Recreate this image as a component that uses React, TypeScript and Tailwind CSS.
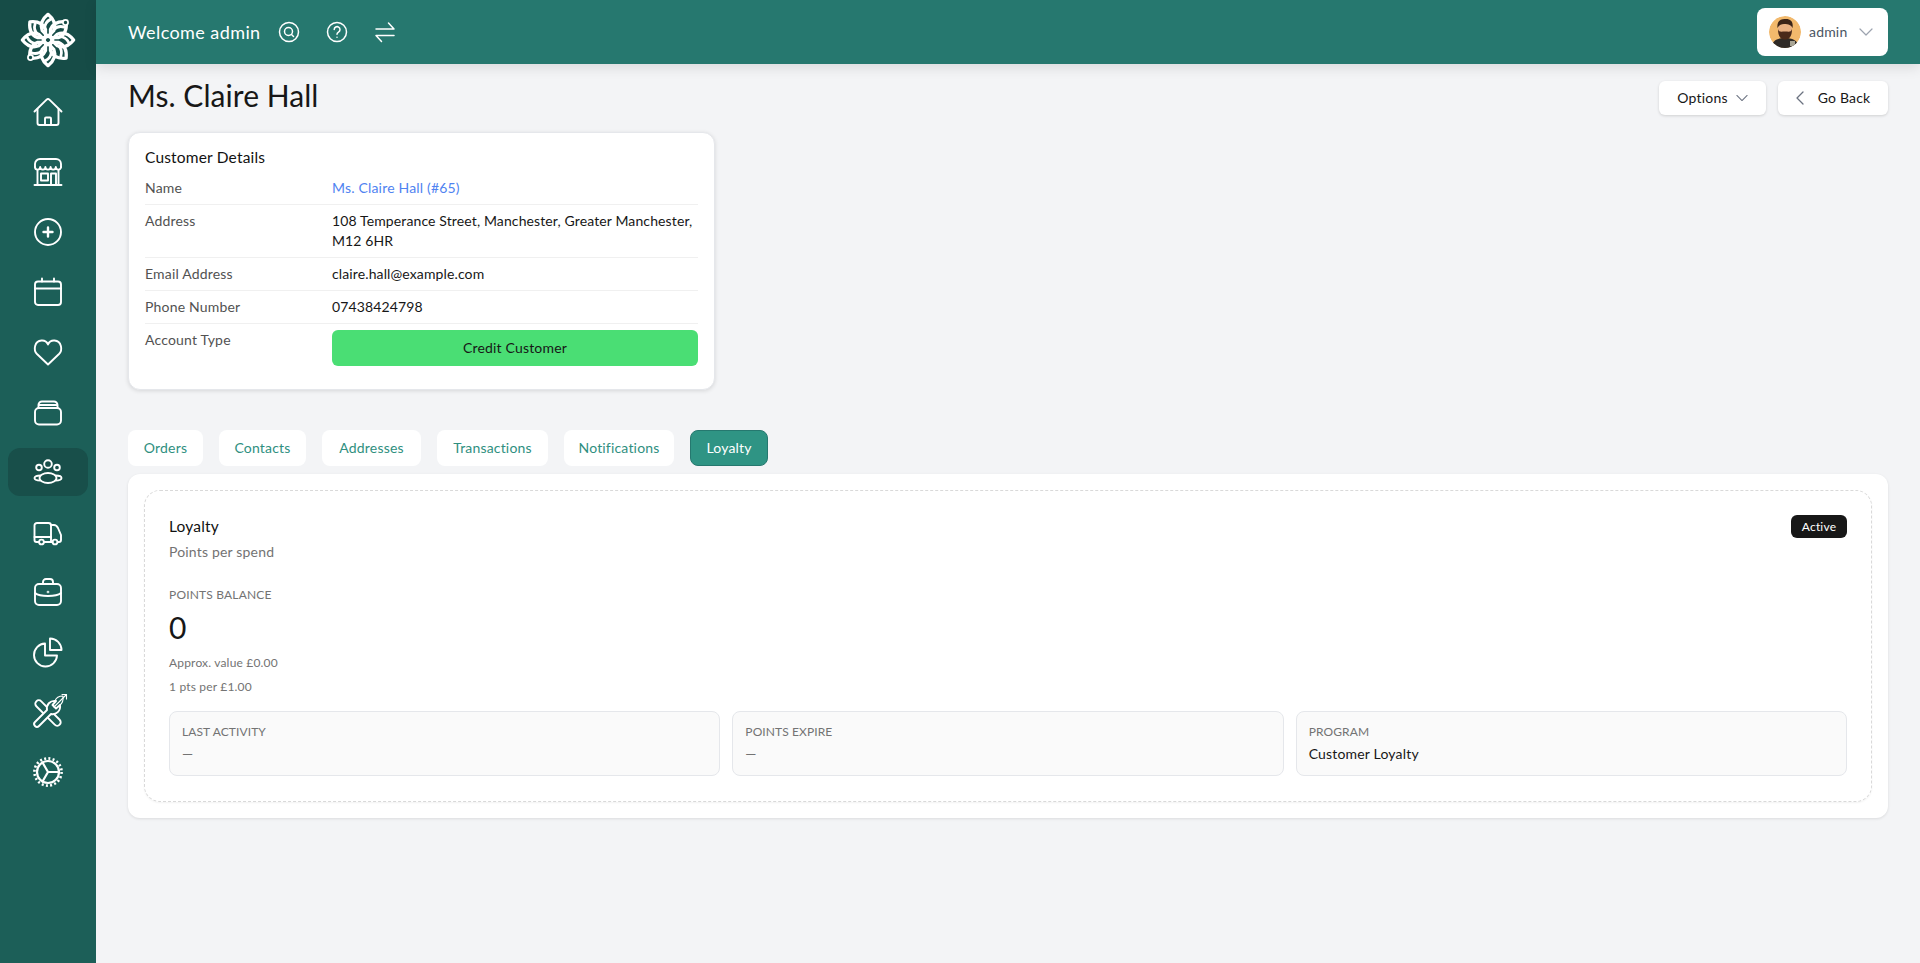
import React from "react";

const S = ({ children }: { children: React.ReactNode }) => (
  <svg width="32" height="32" viewBox="0 0 32 32" fill="none" stroke="white" strokeWidth="1.9" strokeLinecap="round" strokeLinejoin="round">
    {children}
  </svg>
);

const icons: React.ReactNode[] = [
  <S key="home">
    <path d="M2.5 15.5 L14.6 3.6 a2 2 0 0 1 2.8 0 L29.5 15.5" />
    <path d="M5.5 13 V27 a2 2 0 0 0 2 2 h17 a2 2 0 0 0 2-2 V13" />
    <path d="M13 29 v-6.5 a1 1 0 0 1 1-1 h4 a1 1 0 0 1 1 1 V29" />
  </S>,
  <S key="store">
    <path d="M5.500 14 V29 M26.500 14 V29 M2.500 29 H29.500" />
    <path d="M3 11 V8 a5 5 0 0 1 5-5 h16 a5 5 0 0 1 5 5 v3" />
    <path d="M3 11 a2.600 2.600 0 0 0 5.200 0 a2.600 2.600 0 0 0 5.200 0 a2.600 2.600 0 0 0 5.200 0 a2.600 2.600 0 0 0 5.200 0 a2.600 2.600 0 0 0 5.200 0" />
    <path d="M9 17.500 h7 v7 H9z" />
    <path d="M19 29 V17.500 h5 V29" />
  </S>,
  <S key="plus">
    <circle cx="16" cy="16" r="13" />
    <path d="M16 11.500 V20.500 M11.500 16 H20.500" strokeWidth="2.400" />
  </S>,
  <S key="cal">
    <rect x="3" y="5.500" width="26" height="23.500" rx="3" />
    <path d="M3 12.500 H29 M10 2.500 V5.500 M22 2.500 V5.500" />
  </S>,
  <S key="heart">
    <path d="M16 28.500 L5 18 C1 14 2.500 5 9.500 4.500 C12.500 4.300 15 6 16 8.500 C17 6 19.500 4.300 22.500 4.500 C29.500 5 31 14 27 18Z" />
  </S>,
  <S key="stack">
    <rect x="3" y="12" width="26" height="16.500" rx="4" />
    <path d="M6.500 12 V9 a3.500 3.500 0 0 1 3.500-3.500 h12 a3.500 3.500 0 0 1 3.500 3.500 v3" />
    <path d="M6.800 9 H25.200" />
  </S>,
  <S key="users">
    <circle cx="16" cy="8" r="3.800" />
    <circle cx="7" cy="11.500" r="2.800" />
    <circle cx="25" cy="11.500" r="2.800" />
    <ellipse cx="16" cy="22" rx="8.500" ry="5" />
    <path d="M8.500 19.500 C5 19.500 2.500 20.500 2.500 22 C2.500 23.500 5 24.500 8.500 24.500" />
    <path d="M23.500 19.500 C27 19.500 29.500 20.500 29.500 22 C29.500 23.500 27 24.500 23.500 24.500" />
  </S>,
  <S key="truck">
    <path d="M7 26 H4.500 a2 2 0 0 1-2-2 V9.500 a2.500 2.500 0 0 1 2.500-2.500 h11.500 a2.500 2.500 0 0 1 2.500 2.500 V26 H12" />
    <path d="M2.500 21 H19" />
    <path d="M19 9 h3 c2 0 3 1 4 3 l3 7 v5 a2 2 0 0 1-2 2 h-1 M19 26 H20.500" />
    <circle cx="9.500" cy="26" r="2.400" />
    <circle cx="23" cy="26" r="2.400" />
  </S>,
  <S key="case">
    <path d="M11 8 V6 a3 3 0 0 1 3-3 h4 a3 3 0 0 1 3 3 v2" />
    <rect x="3" y="8" width="26" height="21" rx="4" />
    <path d="M3 17 C8 21 24 21 29 17" />
    <circle cx="16" cy="16" r=".4" />
  </S>,
  <S key="pie">
    <path d="M13 7.500 A11.500 11.500 0 1 0 25 19.500 H13Z" />
    <path d="M18 2.500 A11.500 11.500 0 0 1 29.500 14 H18Z" />
  </S>,
  <svg key="tools" width="40" height="40" viewBox="0 0 40 40" fill="none" stroke="white" strokeWidth="1.900" strokeLinecap="round" strokeLinejoin="round">
    <rect x="3.500" y="17.500" width="33" height="7" rx="3.500" transform="rotate(45 20 21)" />
    <path d="M7 30 L19 18 C18 13 22 8 28 9 L24.500 13 L28 16.500 L32 13 C33 19 28 23 23 22 L11 34 a2.800 2.800 0 0 1-4-4Z" fill="#1c5f58" />
    <path d="M27 9 C28 6 31 4 35 4 C35.500 8 34.500 11 32 13" strokeWidth="1.100" />
    <path d="M26 15 L38.500 2.500 M34 2.500 H38.500 V7" strokeWidth="1.100" />
  </svg>,
  <S key="gear">
    <circle cx="16" cy="16" r="11" strokeWidth="2.200" />
    <circle cx="16" cy="16" r="13.600" strokeWidth="2.600" strokeDasharray="2 2.270" strokeLinecap="butt" />
    <path d="M16 16 H27 M16 16 L10.500 6.500 M16 16 L10.500 25.500" strokeWidth="2.200" />
  </S>,
];

const Petal = ({ r }: { r: number }) => (
  <g transform={`rotate(${r} 24 24)`}>
    <path d="M24 2 C29 6 31 11 29 16 L24 21 L19 16 C17 11 19 6 24 2Z" fill="none" stroke="white" strokeWidth="2.800" strokeLinejoin="round" />
    <path d="M29 15 C32 12 35 12 38 13" fill="none" stroke="white" strokeWidth="2.400" strokeLinecap="round" />
  </g>
);

const Logo = () => (
  <svg width="56" height="56" viewBox="0 0 48 48">
    {[0, 45, 90, 135, 180, 225, 270, 315].map((r) => (
      <Petal key={r} r={r} />
    ))}
    <circle cx="39" cy="9" r="2.200" fill="#164c47" stroke="white" strokeWidth="1.500" />
    <circle cx="9" cy="39" r="2.200" fill="#164c47" stroke="white" strokeWidth="1.500" />
  </svg>
);

const Avatar = () => (
  <svg width="32" height="32" viewBox="0 0 32 32" className="rounded-full">
    <circle cx="16" cy="16" r="16" fill="#f2b96c" />
    <path d="M2 32 C3 24 9 22 16 22 C23 22 29 24 30 32Z" fill="#2e2a26" />
    <rect x="21" y="25" width="5" height="5" fill="#a9a595" />
    <ellipse cx="16" cy="13" rx="7" ry="8.500" fill="#e8b183" />
    <path d="M9 13 C9 21 12 23.500 16 23.500 C20 23.500 23 21 23 13 C22 16.500 20 15.500 16 15.500 C12 15.500 10 16.500 9 13Z" fill="#4a2a1a" />
    <path d="M8.500 12 C7.500 4 13 2.500 17 3 C22 3 24.500 6 23.500 12 C22 9 20 8 15 8 C12 8 10 9 8.500 12Z" fill="#3a2418" />
  </svg>
);

const Chevron = ({ c = "#6b7280", w = 14 }: { c?: string; w?: number }) => (
  <svg width={w} height={w} viewBox="0 0 14 14" fill="none" stroke={c} strokeWidth="1.200" strokeLinecap="round" strokeLinejoin="round">
    <path d="M1 4 L7 10 L13 4" />
  </svg>
);

const rows: [string, React.ReactNode][] = [
  ["Address", <>108 Temperance Street, Manchester, Greater Manchester,<br />M12 6HR</>],
  ["Email Address", "claire.hall@example.com"],
  ["Phone Number", "07438424798"],
];

const tabs: [string, string][] = [
  ["Orders", "w-[75px]"],
  ["Contacts", "w-[87px]"],
  ["Addresses", "w-[99px]"],
  ["Transactions", "w-[111px]"],
  ["Notifications", "w-[110px]"],
];

const Stat = ({ label, value, dim }: { label: string; value: string; dim?: boolean }) => (
  <div className="rounded-lg border border-[#e5e7eb] bg-[#fafafa] px-3 pb-[11px] pt-[12px]">
    <div className="text-xs leading-4 text-[#737373] tracking-[0.1px]">{label}</div>
    <div className={`mt-1 text-sm leading-5 ${dim ? "text-[#737373]" : "text-[#171717]"}`}>{value}</div>
  </div>
);

export default function App() {
  return (
    <div className="flex min-h-[963px] bg-[#f3f4f6] font-['Lato','Noto_Sans',sans-serif] tracking-[0.18px] text-[#171717]">
      <aside className="w-24 shrink-0 bg-[#1c5f58]">
        <div className="flex h-20 items-center justify-center bg-[#164c47]">
          <Logo />
        </div>
        <nav className="flex flex-col gap-3 px-2 pt-2">
          {icons.map((ic, i) => (
            <div key={i} className={`flex h-12 items-center justify-center rounded-xl ${i === 6 ? "bg-[#184f4a]" : ""}`}>
              {ic}
            </div>
          ))}
        </nav>
      </aside>

      <div className="flex min-w-0 flex-1 flex-col">
        <header className="flex h-16 items-center justify-between bg-[#26786f] pl-8 pr-8 shadow-[0_4px_12px_rgba(0,0,0,0.1)]">
          <div className="flex items-center text-white">
            <span className="text-lg tracking-[0.42px]">Welcome admin</span>
            <svg className="ml-[17px]" width="22" height="22" viewBox="0 0 22 22" fill="none" stroke="white" strokeWidth="1.500" strokeLinecap="round">
              <circle cx="11" cy="11" r="9.500" />
              <circle cx="10.500" cy="10.500" r="4" />
              <path d="M13.500 13.500 L15.500 15.500" />
            </svg>
            <svg className="ml-[26px]" width="22" height="22" viewBox="0 0 22 22" fill="none" stroke="white" strokeWidth="1.500" strokeLinecap="round" strokeLinejoin="round">
              <circle cx="11" cy="11" r="9.500" />
              <path d="M8.200 8.500 a2.900 2.900 0 1 1 4.300 2.600 c-1 .6-1.500 1-1.500 2.200" />
              <path d="M11 16.200 v.1" />
            </svg>
            <svg className="ml-[26px]" width="22" height="22" viewBox="0 0 22 22" fill="none" stroke="white" strokeWidth="1.500" strokeLinecap="round" strokeLinejoin="round">
              <path d="M2 8 H20 L14.500 2" />
              <path d="M20 14.500 H2 L7.500 20.500" />
            </svg>
          </div>
          <div className="flex h-12 w-[131px] items-center rounded-lg bg-white pl-3 text-sm text-[#4b5563]">
            <Avatar />
            <span className="ml-2">admin</span>
            <span className="ml-3"><Chevron c="#9ca3af" /></span>
          </div>
        </header>

        <main className="px-8">
          <div className="flex justify-between pt-[13px]">
            <h1 className="text-3xl leading-9 tracking-[0.05px] text-[#171717]">Ms. Claire Hall</h1>
            <div className="mt-1 flex h-[34px] gap-3">
              <button className="flex w-[107px] items-center justify-center gap-2 rounded-md bg-white text-sm shadow-[0_1px_3px_rgba(0,0,0,0.15)]">
                Options <Chevron w={12} />
              </button>
              <button className="flex w-[110px] items-center justify-center gap-[14px] rounded-md bg-white text-sm shadow-[0_1px_3px_rgba(0,0,0,0.15)]">
                <svg width="8" height="14" viewBox="0 0 8 14" fill="none" stroke="#6b7280" strokeWidth="1.300" strokeLinecap="round" strokeLinejoin="round">
                  <path d="M7 1 L1 7 L7 13" />
                </svg>
                Go Back
              </button>
            </div>
          </div>

          <section className="mt-[17px] w-[587px] rounded-xl border border-[#e5e7eb] bg-white px-4 pb-[23px] pt-3 shadow-[0_1px_4px_rgba(0,0,0,0.12)]">
            <h2 className="text-[15.500px] leading-6 text-[#111]">Customer Details</h2>
            <div className="mt-[3px] grid grid-cols-[187px_1fr] border-b border-[#f0f0f0] py-[6px] text-sm leading-5">
              <span className="text-[#525252]">Name</span>
              <span className="text-[#4f83f1]">Ms. Claire Hall (#65)</span>
            </div>
            {rows.map(([k, v]) => (
              <div key={k} className="grid grid-cols-[187px_1fr] border-b border-[#f0f0f0] py-[6px] text-sm leading-5">
                <span className="text-[#525252]">{k}</span>
                <span className="whitespace-nowrap text-[#171717] tracking-[0.12px]">{v}</span>
              </div>
            ))}
            <div className="grid grid-cols-[187px_1fr] pt-[6px] text-sm leading-5">
              <span className="text-[#525252]">Account Type</span>
              <div className="flex h-9 items-center justify-center rounded-md bg-[#4ade74] text-[#171717]">Credit Customer</div>
            </div>
          </section>

          <div className="mt-10 flex gap-4">
            {tabs.map(([t, w]) => (
              <div key={t} className={`flex h-9 items-center justify-center rounded-lg bg-white text-sm text-[#2f8f80] ${w}`}>{t}</div>
            ))}
            <div className="flex h-9 w-[78px] items-center justify-center rounded-lg border border-[#26786f] bg-[#2f9484] text-sm text-white">Loyalty</div>
          </div>

          <section className="mt-2 rounded-xl bg-white p-4 shadow-[0_1px_3px_rgba(0,0,0,0.1)]">
            <div className="rounded-2xl border border-dashed border-[#d9d9d9] px-6 pb-[25px] pt-6 shadow-[0_1px_2px_rgba(0,0,0,0.05)]">
              <div className="flex items-start justify-between">
                <div>
                  <div className="text-[15.500px] leading-[22px] text-[#111]">Loyalty</div>
                  <div className="mt-[5px] text-sm leading-5 text-[#737373]">Points per spend</div>
                </div>
                <span className="flex h-[23px] w-14 items-center justify-center rounded-md bg-[#171717] text-xs text-white">Active</span>
              </div>
              <div className="mt-[25px] text-xs leading-4 text-[#737373]">POINTS BALANCE</div>
              <div className="mt-[6px] text-3xl leading-9">0</div>
              <div className="mt-[10px] text-xs leading-4 text-[#737373]">Approx. value £0.00</div>
              <div className="mt-2 text-xs leading-4 text-[#737373]">1 pts per £1.00</div>
              <div className="mt-4 grid grid-cols-3 gap-3">
                <Stat label="LAST ACTIVITY" value="—" dim />
                <Stat label="POINTS EXPIRE" value="—" dim />
                <Stat label="PROGRAM" value="Customer Loyalty" />
              </div>
            </div>
          </section>
        </main>
      </div>
    </div>
  );
}
